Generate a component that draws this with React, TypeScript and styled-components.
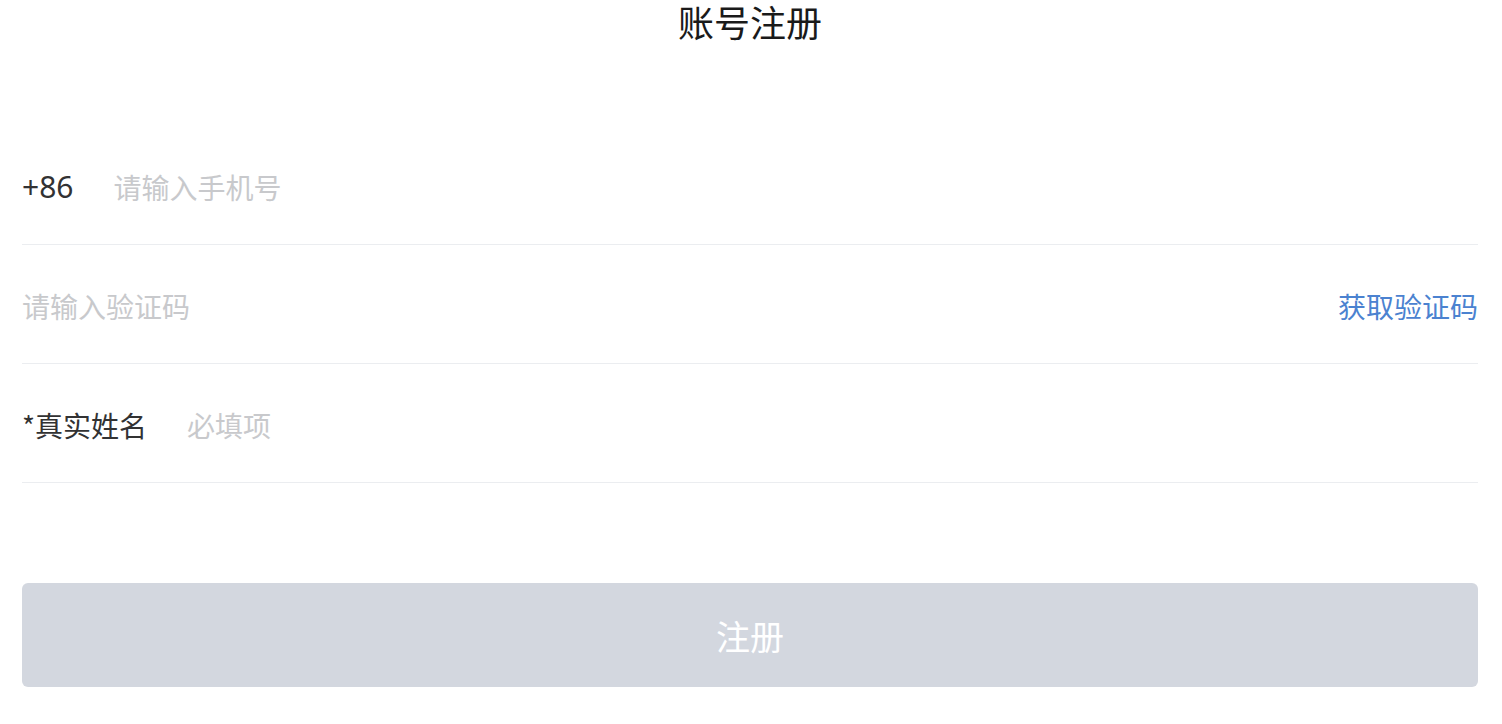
import React from "react";
import styled, { createGlobalStyle } from "styled-components";

const GlobalStyle = createGlobalStyle`
  html, body {
    margin: 0;
    padding: 0;
    background: #fff;
    font-family: "Noto Sans CJK SC", "Noto Sans", sans-serif;
  }
`;

const Page = styled.div`
  padding: 0 24px 0 22px;
`;

const Title = styled.h1`
  margin: 0;
  font-size: 36px;
  font-weight: 400;
  line-height: 42px;
  text-align: center;
  color: #1a1a1a;
`;

const Form = styled.form`
  margin-top: 84px;
  display: flex;
  flex-direction: column;
`;

const Row = styled.div`
  display: flex;
  align-items: center;
  height: 119px;
  padding-top: 3px;
  box-sizing: border-box;
  border-bottom: 1px solid #ebedf0;
`;

const Label = styled.span<{ $latin?: boolean }>`
  font-family: ${(p) =>
    p.$latin ? `"Noto Sans", "Noto Sans CJK SC", sans-serif` : "inherit"};
  font-size: ${(p) => (p.$latin ? "30px" : "28px")};
  color: #323233;
  margin-right: 40px;
  white-space: nowrap;
`;

const Field = styled.input`
  flex: 1;
  min-width: 0;
  border: none;
  outline: none;
  padding: 0;
  background: transparent;
  font-family: inherit;
  font-size: 28px;
  color: #323233;
  &::placeholder {
    color: #c8c9cc;
  }
`;

const CodeLink = styled.span<{ $disabled?: boolean }>`
  font-size: 28px;
  color: ${(p) => (p.$disabled ? "#c8c9cc" : "#4b82d0")};
  white-space: nowrap;
  cursor: pointer;
`;

const Submit = styled.button`
  margin-top: 100px;
  height: 104px;
  border: none;
  border-radius: 6px;
  background: #d3d7df;
  color: #fff;
  font-family: inherit;
  font-size: 34px;
  cursor: not-allowed;
`;

export default function App() {
  return (
    <>
      <GlobalStyle />
      <Page>
        <Title>账号注册</Title>
        <Form onSubmit={(e) => e.preventDefault()}>
          <Row>
            <Label $latin>+86</Label>
            <Field type="tel" placeholder="请输入手机号" />
          </Row>
          <Row>
            <Field type="text" placeholder="请输入验证码" />
            <CodeLink>获取验证码</CodeLink>
          </Row>
          <Row>
            <Label>*真实姓名</Label>
            <Field type="text" placeholder="必填项" />
          </Row>
          <Submit type="submit" disabled>
            注册
          </Submit>
        </Form>
      </Page>
    </>
  );
}
